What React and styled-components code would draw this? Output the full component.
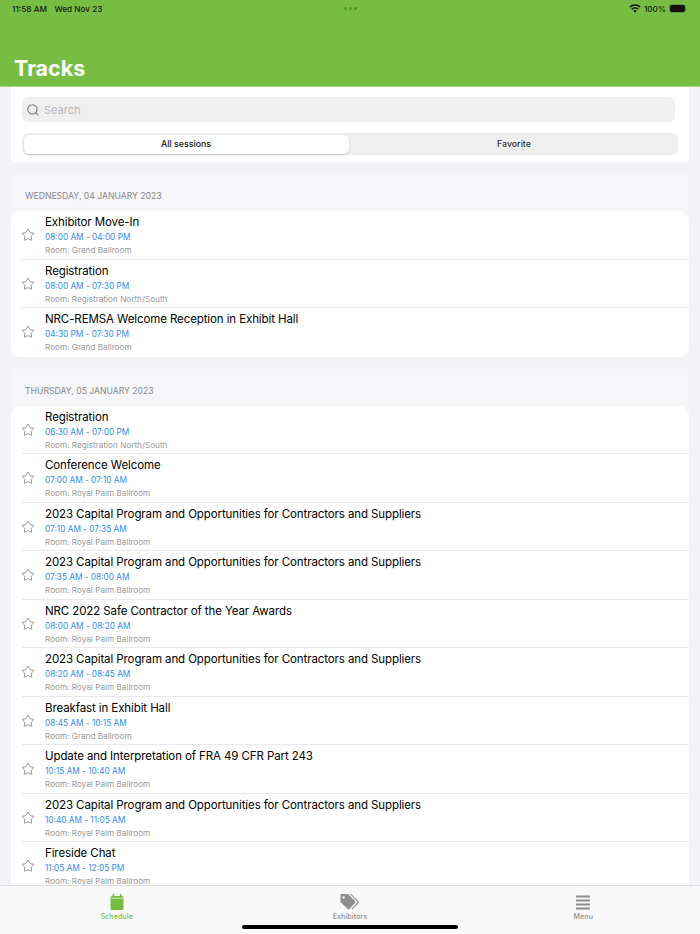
import React from 'react';
import styled, { createGlobalStyle } from 'styled-components';
import { Search, Star } from 'lucide-react';

const DAYS = [
  {
    title: 'WEDNESDAY, 04 JANUARY 2023',
    sessions: [
      { name: 'Exhibitor Move-In', time: '08:00 AM - 04:00 PM', room: 'Grand Ballroom' },
      { name: 'Registration', time: '08:00 AM - 07:30 PM', room: 'Registration North/South' },
      { name: 'NRC-REMSA Welcome Reception in Exhibit Hall', time: '04:30 PM - 07:30 PM', room: 'Grand Ballroom' },
    ],
  },
  {
    title: 'THURSDAY, 05 JANUARY 2023',
    sessions: [
      { name: 'Registration', time: '06:30 AM - 07:00 PM', room: 'Registration North/South' },
      { name: 'Conference Welcome', time: '07:00 AM - 07:10 AM', room: 'Royal Palm Ballroom' },
      { name: '2023 Capital Program and Opportunities for Contractors and Suppliers', time: '07:10 AM - 07:35 AM', room: 'Royal Palm Ballroom' },
      { name: '2023 Capital Program and Opportunities for Contractors and Suppliers', time: '07:35 AM - 08:00 AM', room: 'Royal Palm Ballroom' },
      { name: 'NRC 2022 Safe Contractor of the Year Awards', time: '08:00 AM - 08:20 AM', room: 'Royal Palm Ballroom' },
      { name: '2023 Capital Program and Opportunities for Contractors and Suppliers', time: '08:20 AM - 08:45 AM', room: 'Royal Palm Ballroom' },
      { name: 'Breakfast in Exhibit Hall', time: '08:45 AM - 10:15 AM', room: 'Grand Ballroom' },
      { name: 'Update and Interpretation of FRA 49 CFR Part 243', time: '10:15 AM - 10:40 AM', room: 'Royal Palm Ballroom' },
      { name: '2023 Capital Program and Opportunities for Contractors and Suppliers', time: '10:40 AM - 11:05 AM', room: 'Royal Palm Ballroom' },
      { name: 'Fireside Chat', time: '11:05 AM - 12:05 PM', room: 'Royal Palm Ballroom' },
    ],
  },
];

const App = () => {
  return (
    <Screen>
      <GlobalStyle />
      <Header>
        <StatusBar>
          <StatusGroup>
            <span>11:58 AM</span>
            <span>Wed Nov 23</span>
          </StatusGroup>
          <Dots>
            <i />
            <i />
            <i />
          </Dots>
          <StatusGroup $right>
            <svg width="12" height="9" viewBox="0 0 13 10">
              <path d="M6.5 9.6 4.6 7.5a2.8 2.8 0 0 1 3.8 0z" fill="#111" />
              <path d="M3.5 6.3 2.4 5.1a6 6 0 0 1 8.2 0L9.5 6.3a4.4 4.4 0 0 0-6 0z" fill="#111" />
              <path d="M1.3 4 .2 2.8a9.2 9.2 0 0 1 12.6 0L11.7 4a7.6 7.6 0 0 0-10.4 0z" fill="#111" />
            </svg>
            <BatteryText>100%</BatteryText>
            <Battery />
          </StatusGroup>
        </StatusBar>
        <PageTitle>Tracks</PageTitle>
      </Header>

      <Content>
        <FilterPanel>
          <SearchBox>
            <Search size={14} color="#77777b" strokeWidth={1.8} />
            <span>Search</span>
          </SearchBox>
          <Segments>
            <Segment $active>All sessions</Segment>
            <Segment>Favorite</Segment>
          </Segments>
        </FilterPanel>

        {DAYS.map((day) => (
          <Day key={day.title}>
            <DayTitle>{day.title}</DayTitle>
            <Card>
              {day.sessions.map((session, i) => (
                <Row key={session.time + i}>
                  <StarSlot>
                    <Star size={14} color="#77777b" strokeWidth={1.3} />
                  </StarSlot>
                  <RowText>
                    <SessionName>{session.name}</SessionName>
                    <SessionTime>{session.time}</SessionTime>
                    <SessionRoom>Room: {session.room}</SessionRoom>
                  </RowText>
                </Row>
              ))}
            </Card>
          </Day>
        ))}
      </Content>

      <TabBar>
        <Tab $active>
          <TabIcon>
            <svg width="14" height="16" viewBox="0 0 14 16">
              <rect x="0.5" y="2" width="13" height="14" rx="1.5" fill="#77bd43" />
              <rect x="2.5" y="0" width="1.6" height="3" fill="#77bd43" />
              <rect x="9.9" y="0" width="1.6" height="3" fill="#77bd43" />
              <rect x="0.5" y="3.8" width="13" height="0.7" fill="#f9f9f9" />
            </svg>
          </TabIcon>
          <TabLabel>Schedule</TabLabel>
        </Tab>
        <Tab>
          <TabIcon>
            <svg width="19" height="16" viewBox="0 0 19 16">
              <path d="M1 0h6.5a1.5 1.5 0 0 1 1 .4l6.6 6.7a1.2 1.2 0 0 1 0 1.7L9.4 15.1a1.2 1.2 0 0 1-1.7 0L.5 8V.6zM3.7 2.3a1.2 1.2 0 1 0 0 2.4 1.2 1.2 0 0 0 0-2.4z" fill="#8e8e8e" fillRule="evenodd" />
              <path d="M10 0h1.2l6.9 7a1.8 1.8 0 0 1 0 2.5L12.2 15.6l-.9-.8 5.800-6.100a.8.8 0 0 0 0-1.100z" fill="#8e8e8e" />
            </svg>
          </TabIcon>
          <TabLabel>Exhibitors</TabLabel>
        </Tab>
        <Tab>
          <TabIcon>
            <svg width="14" height="15" viewBox="0 0 14 15">
              <rect x="0" y="0.5" width="14" height="2" fill="#8e8e8e" />
              <rect x="0" y="4.5" width="14" height="2" fill="#8e8e8e" />
              <rect x="0" y="8.5" width="14" height="2" fill="#8e8e8e" />
              <rect x="0" y="12.5" width="14" height="2" fill="#8e8e8e" />
            </svg>
          </TabIcon>
          <TabLabel>Menu</TabLabel>
        </Tab>
        <HomeBar />
      </TabBar>
    </Screen>
  );
};

export default App;

const GlobalStyle = createGlobalStyle`
  html, body {
    margin: 0;
    padding: 0;
    background: #f2f2f7;
    font-family: Inter, "Liberation Sans", sans-serif;
  }
`;

const Screen = styled.div`
  position: relative;
  width: 700px;
  height: 934px;
  display: flex;
  flex-direction: column;
  overflow: hidden;
  background: #f2f2f7;
`;

const Header = styled.header`
  height: 87px;
  flex-shrink: 0;
  display: flex;
  flex-direction: column;
  background: #77bd43;
  border-bottom: 1px solid #a6d587;
  box-sizing: border-box;
`;

const StatusBar = styled.div`
  height: 17px;
  display: grid;
  grid-template-columns: 1fr auto 1fr;
  align-items: center;
  padding: 0 12px;
  font-size: 8.2px;
  font-weight: 500;
  color: #16200f;
`;

const StatusGroup = styled.div`
  display: flex;
  align-items: center;
  gap: ${(p) => (p.$right ? '3px' : '7.5px')};
  justify-content: ${(p) => (p.$right ? 'flex-end' : 'flex-start')};
`;

const BatteryText = styled.span`
  font-size: 8.2px;
`;

const Battery = styled.div`
  width: 15px;
  height: 7px;
  background: #111;
  border-radius: 2px;
  box-shadow: 0 0 0 1px #5f9a38;
  margin: 0 3px 0 1px;
`;

const Dots = styled.div`
  display: flex;
  gap: 2px;
  i {
    width: 3px;
    height: 3px;
    border-radius: 50%;
    background: #4c9a1e;
  }
`;

const PageTitle = styled.h1`
  margin: auto 0 3px;
  padding: 0 0 0 14px;
  font-size: 21.5px;
  line-height: 30px;
  font-weight: 700;
  color: #fff;
`;

const Content = styled.main`
  flex: 1;
  min-height: 0;
  overflow: hidden;
  padding: 0 11px;
`;

const FilterPanel = styled.section`
  background: #fff;
  padding: 10px 11px 7px;
  height: 75px;
  box-sizing: border-box;
`;

const SearchBox = styled.div`
  width: 653px;
  height: 25px;
  box-sizing: border-box;
  display: flex;
  align-items: center;
  gap: 4px;
  padding-left: 4px;
  background: #efeff0;
  border-radius: 6px;
  font-size: 11px;
  color: #b9b9bc;
`;

const Segments = styled.div`
  margin-top: 11px;
  width: 656px;
  height: 22px;
  display: grid;
  grid-template-columns: 1fr 1fr;
  background: #efeff0;
  border-radius: 6px;
`;

const Segment = styled.div`
  display: flex;
  align-items: center;
  justify-content: center;
  padding-bottom: 1px;
  box-sizing: border-box;
  font-size: 8.8px;
  font-weight: 500;
  color: ${(p) => (p.$active ? '#111' : '#333')};
  border-radius: 5px;
  ${(p) =>
    p.$active &&
    `
    margin: 1.5px 1.5px 1.5px 1.5px;
    background: #fff;
    box-shadow: 0 1px 2px rgba(0, 0, 0, 0.2);
  `}
`;

const Day = styled.section`
  margin-top: 12px;
  background: #f6f6f8;
`;

const DayTitle = styled.h2`
  margin: 0;
  height: 37px;
  box-sizing: border-box;
  padding: 16px 0 0 14px;
  font-size: 8.65px;
  line-height: 12px;
  font-weight: 400;
  color: #88888c;
`;

const Card = styled.div`
  background: #fff;
  border-radius: 10px;
`;

const Row = styled.div`
  height: 48.5px;
  box-sizing: border-box;
  display: flex;
  position: relative;
  & + &::before {
    content: '';
    position: absolute;
    top: -1px;
    left: 11px;
    right: 0;
    height: 1px;
    background: #eaeaec;
  }
`;

const StarSlot = styled.div`
  width: 34px;
  flex-shrink: 0;
  display: flex;
  align-items: center;
  justify-content: center;
  box-sizing: border-box;
`;

const RowText = styled.div`
  display: flex;
  flex-direction: column;
  padding-top: 3px;
`;

const SessionName = styled.div`
  font-size: 11.5px;
  line-height: 16px;
  letter-spacing: -0.1px;
  color: #000;
`;

const SessionTime = styled.div`
  margin-top: 1px;
  font-size: 8.25px;
  line-height: 12px;
  color: #2f8cf0;
`;

const SessionRoom = styled.div`
  margin-top: 1px;
  font-size: 8.2px;
  line-height: 12px;
  color: #98989c;
`;

const TabBar = styled.nav`
  position: relative;
  height: 49px;
  flex-shrink: 0;
  box-sizing: border-box;
  display: grid;
  grid-template-columns: repeat(3, 1fr);
  background: #f9f9f9;
  border-top: 1px solid #dddddf;
`;

const Tab = styled.div`
  display: flex;
  flex-direction: column;
  align-items: center;
  padding-top: 8px;
  color: ${(p) => (p.$active ? '#77bd43' : '#8e8e8e')};
`;

const TabIcon = styled.div`
  height: 16px;
  display: flex;
  align-items: center;
  justify-content: center;
`;

const TabLabel = styled.span`
  margin-top: 1.5px;
  font-size: 7px;
  line-height: 9px;
  font-weight: 500;
  letter-spacing: 0.15px;
`;

const HomeBar = styled.div`
  position: absolute;
  left: 242px;
  bottom: 5px;
  width: 216px;
  height: 4px;
  border-radius: 2px;
  background: #000;
`;
